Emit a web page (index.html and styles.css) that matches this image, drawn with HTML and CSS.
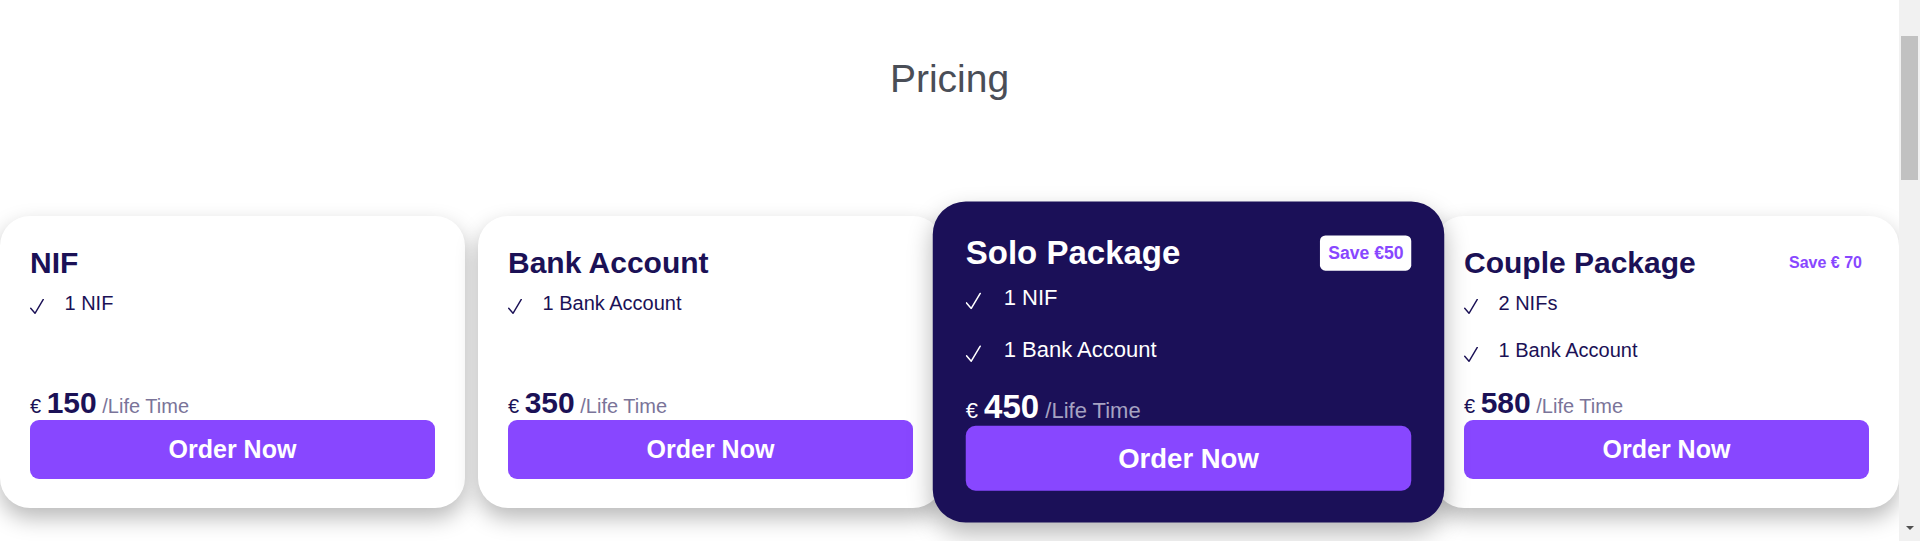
FILE: index.html
```html
<!DOCTYPE html>
<html lang="en">
<head>
<meta charset="utf-8">
<title>Pricing</title>
<link rel="stylesheet" href="styles.css">
</head>
<body>
<div class="page">
  <main class="content">
    <h1 class="title">Pricing</h1>
    <div class="cards">
      <article class="card">
        <div class="card-head"><h2 class="card-title">NIF</h2></div>
        <ul class="features">
          <li><svg class="check" viewBox="0 0 14 15"><path d="M0.7 9.3 L5 14.3 L13.3 0.3"/></svg><span>1 NIF</span></li>
        </ul>
        <div class="price"><span class="cur">€</span> <span class="amount">150</span> <span class="per">/Life Time</span></div>
        <button class="order">Order Now</button>
      </article>
      <article class="card">
        <div class="card-head"><h2 class="card-title">Bank Account</h2></div>
        <ul class="features">
          <li><svg class="check" viewBox="0 0 14 15"><path d="M0.7 9.3 L5 14.3 L13.3 0.3"/></svg><span>1 Bank Account</span></li>
        </ul>
        <div class="price"><span class="cur">€</span> <span class="amount">350</span> <span class="per">/Life Time</span></div>
        <button class="order">Order Now</button>
      </article>
      <article class="card card-featured">
        <div class="card-head"><h2 class="card-title">Solo Package</h2><span class="badge">Save €50</span></div>
        <ul class="features">
          <li><svg class="check" viewBox="0 0 14 15"><path d="M0.7 9.3 L5 14.3 L13.3 0.3"/></svg><span>1 NIF</span></li>
          <li><svg class="check" viewBox="0 0 14 15"><path d="M0.7 9.3 L5 14.3 L13.3 0.3"/></svg><span>1 Bank Account</span></li>
        </ul>
        <div class="price"><span class="cur">€</span> <span class="amount">450</span> <span class="per">/Life Time</span></div>
        <button class="order">Order Now</button>
      </article>
      <article class="card">
        <div class="card-head"><h2 class="card-title">Couple Package</h2><span class="badge">Save € 70</span></div>
        <ul class="features">
          <li><svg class="check" viewBox="0 0 14 15"><path d="M0.7 9.3 L5 14.3 L13.3 0.3"/></svg><span>2 NIFs</span></li>
          <li><svg class="check" viewBox="0 0 14 15"><path d="M0.7 9.3 L5 14.3 L13.3 0.3"/></svg><span>1 Bank Account</span></li>
        </ul>
        <div class="price"><span class="cur">€</span> <span class="amount">580</span> <span class="per">/Life Time</span></div>
        <button class="order">Order Now</button>
      </article>
    </div>
  </main>
  <div class="scrollbar">
    <div class="thumb"></div>
    <div class="arrow"></div>
  </div>
</div>
</body>
</html>
```

FILE: styles.css
```css
* {
  box-sizing: border-box;
}

html, body {
  margin: 0;
  padding: 0;
  height: 541px;
  overflow: hidden;
  background: #ffffff;
  font-family: "Liberation Sans", Arial, sans-serif;
}

.page {
  display: flex;
  width: 1920px;
  height: 541px;
}

.content {
  flex: 1;
  min-width: 0;
  display: flex;
  flex-direction: column;
  align-items: stretch;
}

.title {
  margin: 0;
  padding-top: 57px;
  font-size: 39px;
  line-height: 44px;
  font-weight: 400;
  color: #4a4e57;
  text-align: center;
}

.cards {
  margin-top: 115px;
  display: flex;
  gap: 13px;
}

.card {
  flex: 1;
  height: 292px;
  padding: 30px 30px 29px;
  background: #ffffff;
  border-radius: 30px;
  box-shadow: 0 10px 22px rgba(0, 0, 0, 0.28);
  display: flex;
  flex-direction: column;
  color: #1b1156;
}

.card-featured {
  position: relative;
  z-index: 1;
  transform: scale(1.1);
  background: #1b1058;
  color: #ffffff;
}

.card-head {
  display: flex;
  justify-content: space-between;
  align-items: center;
}

.card-title {
  margin: 0;
  font-size: 30px;
  line-height: 34px;
  font-weight: 700;
}

.badge {
  background: #ffffff;
  color: #8847ff;
  font-size: 16px;
  font-weight: 700;
  line-height: 18.4px;
  padding: 7px;
  border-radius: 5px;
}

.features {
  list-style: none;
  margin: 11.5px 0 0;
  padding: 0;
  display: flex;
  flex-direction: column;
  gap: 24.6px;
}

.features li {
  display: flex;
  align-items: flex-start;
  font-size: 20px;
  line-height: 23px;
}

.check {
  width: 14px;
  height: 15px;
  margin-top: 7.5px;
  margin-right: 20.5px;
  flex: none;
  fill: none;
  stroke: currentColor;
  stroke-width: 1.4;
  stroke-linecap: round;
  stroke-linejoin: round;
}

.price {
  margin-top: auto;
  font-size: 20px;
  line-height: 28px;
  white-space: nowrap;
}

.amount {
  font-size: 30px;
  font-weight: 700;
}

.per {
  color: #7a7499;
}

.card-featured .per {
  color: #a6a2c2;
}

.order {
  display: flex;
  align-items: center;
  justify-content: center;
  width: 100%;
  height: 59px;
  border: none;
  border-radius: 9px;
  background: #8847ff;
  color: #ffffff;
  font-family: "Liberation Sans", Arial, sans-serif;
  font-size: 25px;
  font-weight: 700;
  padding: 0;
}

.scrollbar {
  width: 21px;
  height: 541px;
  flex: none;
  background: #f1f1f1;
  display: flex;
  flex-direction: column;
  align-items: center;
}

.thumb {
  margin-top: 36px;
  width: 17px;
  height: 144px;
  background: #c1c1c1;
}

.arrow {
  margin-top: auto;
  margin-bottom: 11px;
  width: 0;
  height: 0;
  border-left: 4px solid transparent;
  border-right: 4px solid transparent;
  border-top: 4px solid #505050;
}
```
